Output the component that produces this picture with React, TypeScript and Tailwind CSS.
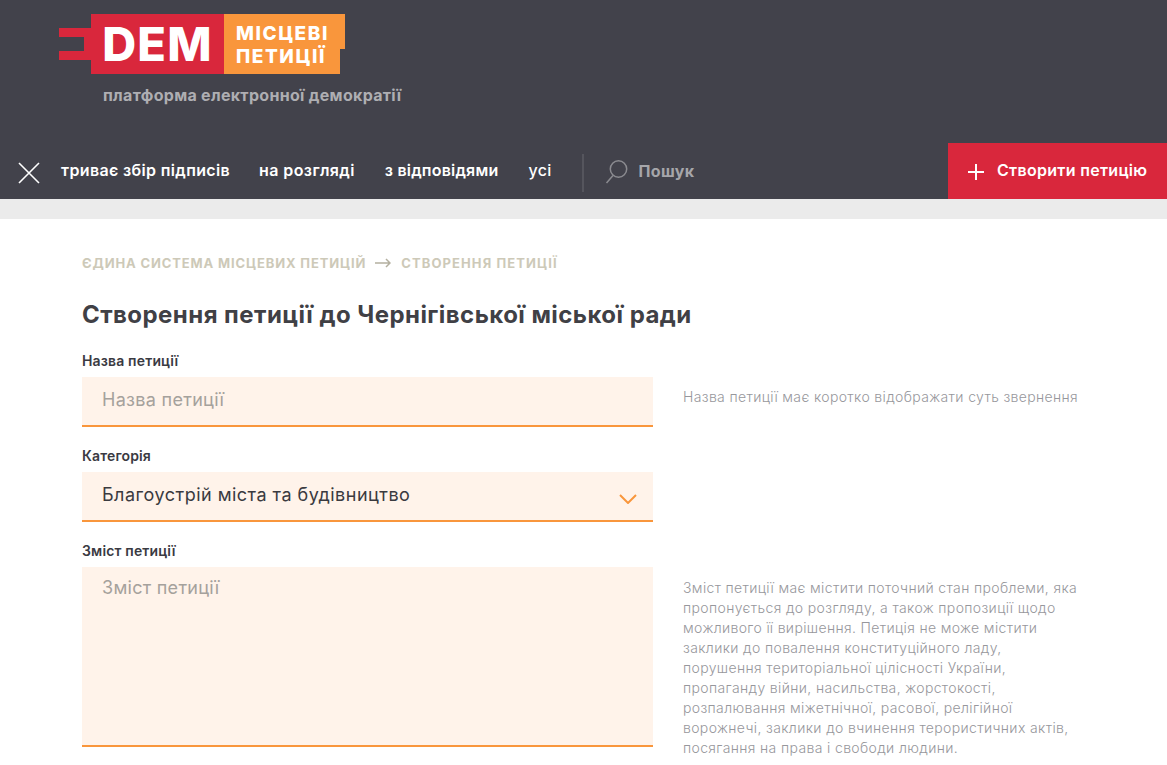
import React from "react";

const font = { fontFamily: "Inter, 'Noto Sans', sans-serif" };

function Logo() {
  return (
    <div className="flex h-[60px] items-stretch">
      <svg width="32" height="60" viewBox="0 0 32 60" className="block">
        <path d="M0 14h32v9H0zM0 37h32v9H0zM25 14h7v32h-7z" fill="#d9273c" />
      </svg>
      <div className="flex w-[133px] items-center justify-center bg-[#d9273c] pb-[1px] text-[47px] font-extrabold leading-none tracking-[1.2px] text-white">
        DEM
      </div>
      <div className="relative w-[121px]">
        <div className="h-[35px] w-[121px] bg-[#f9963c]" />
        <div className="h-[25px] w-[116px] bg-[#f9963c]" />
        <div className="absolute left-[12px] top-[8px] text-[19px] font-extrabold leading-[23px] tracking-[1.55px] text-white">
          <div>МІСЦЕВІ</div>
          <div>ПЕТИЦІЇ</div>
        </div>
      </div>
    </div>
  );
}

function Field({ label, children, hint, hintClass }: { label: string; children: React.ReactNode; hint?: string; hintClass?: string }) {
  return (
    <div className="flex gap-[30px]">
      <div className="w-[571px]">
        <div className="h-[27px] text-[14px] font-semibold leading-[22px] tracking-[0.15px] text-[#3a3a42]">{label}</div>
        {children}
      </div>
      {hint ? <div className={`w-[398px] text-[14px] font-light leading-[20px] tracking-[0.36px] text-[#97979c] ${hintClass ?? ""}`}>{hint}</div> : null}
    </div>
  );
}

export default function App() {
  return (
    <div className="h-screen overflow-hidden bg-white" style={font}>
      <header className="bg-[#42424b]">
        <div className="h-[143px] pl-[59px] pt-[14px]">
          <Logo />
          <div className="ml-[44px] mt-[10px] text-[16px] font-bold leading-[22px] tracking-[0.3px] text-[#aeaeb2]">платформа електронної демократії</div>
        </div>
        <nav className="flex h-[56px] items-center">
          <svg width="22" height="22" viewBox="0 0 22 22" className="ml-[18px] mt-[3px]" fill="none" stroke="#fff" strokeWidth="1.6">
            <path d="M1 1l20 20M21 1L1 21" />
          </svg>
          <div className="ml-[21px] -mt-[2px] flex gap-[30px] text-[16px] font-semibold tracking-[0.35px] text-white">
            <span>триває збір підписів</span>
            <span className="-ml-[1px] tracking-[0.4px]">на розгляді</span>
            <span className="tracking-[0.2px]">з відповідями</span>
            <span className="font-medium">усі</span>
          </div>
          <div className="ml-[30px] mt-[3px] h-[38px] w-[2px] bg-[#55555d]" />
          <svg width="24" height="26" viewBox="0 0 24 26" className="ml-[21px] mt-[2px]" fill="none" stroke="#8b8b90" strokeWidth="1.5">
            <circle cx="13.5" cy="10" r="8.2" />
            <path d="M8 16.5L1.5 24" />
          </svg>
          <span className="ml-[10px] text-[16px] font-bold tracking-[0.3px] text-[#a6a6aa]">Пошук</span>
          <button className="ml-auto flex h-full w-[219px] items-center bg-[#d9273c] pl-[20px] text-[16px] font-semibold tracking-[0.3px] text-white">
            <svg width="16" height="16" viewBox="0 0 16 16" stroke="#fff" strokeWidth="2" className="mt-[1px]">
              <path d="M8 0v16M0 8h16" />
            </svg>
            <span className="ml-[13px] -mt-[2px]">Створити петицію</span>
          </button>
        </nav>
      </header>
      <div className="h-[20px] bg-[#ebebeb]" />
      <main className="px-[82px]">
        <div className="mt-[35px] flex h-[20px] items-center text-[13px] font-bold tracking-[0.87px] text-[#cdc9b8]">
          <span>ЄДИНА СИСТЕМА МІСЦЕВИХ ПЕТИЦІЙ</span>
          <svg width="16" height="10" viewBox="0 0 16 10" fill="none" stroke="#b4b0a0" strokeWidth="1.5" className="ml-[9px] mr-[10px] mb-[3px]">
            <path d="M0 5h15M11 1l4 4-4 4" />
          </svg>
          <span className="tracking-[1.1px]">СТВОРЕННЯ ПЕТИЦІЇ</span>
        </div>
        <h1 className="mt-[25px] h-[32px] text-[24px] font-bold leading-[32px] tracking-[0.45px] text-[#404045]">Створення петиції до Чернігівської міської ради</h1>
        <div className="mt-[19px] flex flex-col gap-[18px]">
          <Field label="Назва петиції" hint="Назва петиції має коротко відображати суть звернення" hintClass="pt-[37px]">
            <div className="flex h-[50px] items-center border-b-2 border-[#f9963c] bg-[#fff3ea] px-[20px] pb-[3px] text-[18px] tracking-[0.3px] text-[#a5a19c]">Назва петиції</div>
          </Field>
          <Field label="Категорія">
            <div className="flex h-[50px] items-center justify-between border-b-2 border-[#f9963c] bg-[#fff3ea] pl-[20px] pr-[16px] text-[18px] tracking-[0.48px] text-[#3a3a3f]">
              <span className="-mt-[3px]">Благоустрій міста та будівництво</span>
              <svg width="18" height="10" viewBox="0 0 18 10" fill="none" stroke="#f9963c" strokeWidth="2" className="mt-[5px]">
                <path d="M1 1l8 8 8-8" />
              </svg>
            </div>
          </Field>
          <Field
            label="Зміст петиції"
            hint="Зміст петиції має містити поточний стан проблеми, яка пропонується до розгляду, а також пропозиції щодо можливого її вирішення. Петиція не може містити заклики до повалення конституційного ладу, порушення територіальної цілісності України, пропаганду війни, насильства, жорстокості, розпалювання міжетнічної, расової, релігійної ворожнечі, заклики до вчинення терористичних актів, посягання на права і свободи людини."
            hintClass="pt-[38px]"
          >
            <div className="h-[180px] border-b-2 border-[#f9963c] bg-[#fff3ea] px-[20px] pt-[8px] text-[18px] leading-[26px] tracking-[0.28px] text-[#a5a19c]">Зміст петиції</div>
          </Field>
        </div>
      </main>
    </div>
  );
}
